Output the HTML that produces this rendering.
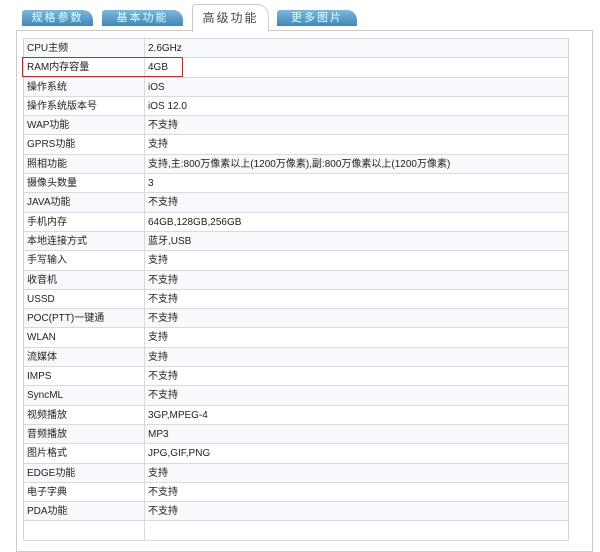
<!DOCTYPE html>
<html><head><meta charset="utf-8"><style>
body{margin:0;width:600px;height:522px;overflow:hidden;background:#fff;font-family:"Liberation Sans","Noto Sans CJK SC",sans-serif;position:relative}
.tab{position:absolute;top:10px;height:16px;background:linear-gradient(#7fb6d8,#3f88bb);color:#dff;font-size:11px;line-height:16px;text-align:center;letter-spacing:2px;border-radius:3px 10px 0 0}
.act{position:absolute;top:4px;left:192px;width:75px;height:27px;background:#fff;border:1px solid #ccc;border-bottom:none;border-radius:4px 12px 0 0;font-size:12px;text-align:center;line-height:26px;color:#444;letter-spacing:2px;z-index:2}
.box{position:absolute;left:16px;top:30px;width:575px;height:520px;border:1px solid #ccc}
.tbl{position:absolute;left:23px;top:38px;width:544px;border:1px solid #d4d4d4;border-bottom:none}
.r{height:19.3px;border-bottom:1px solid #dadada;box-sizing:border-box;font-size:10px;line-height:19px;color:#222;display:flex}
.r:nth-child(odd){background:#f8f9fc}
.r div:first-child{width:117px;padding-left:3px;border-right:1px solid #dadada}
.r div:last-child{padding-left:3px}
.red{position:absolute;left:22px;top:57px;width:161px;height:20px;border:1.5px solid #b03030;box-sizing:border-box}
</style></head><body>
<div class="box"></div>
<div class="tab" style="left:22px;width:71px">规格参数</div>
<div class="tab" style="left:102px;width:81px">基本功能</div>
<div class="act">高级功能</div>
<div class="tab" style="left:277px;width:80px">更多图片</div>
<div class="tbl">
<div class="r"><div>CPU主频</div><div>2.6GHz</div></div>
<div class="r"><div>RAM内存容量</div><div>4GB</div></div>
<div class="r"><div>操作系统</div><div>iOS</div></div>
<div class="r"><div>操作系统版本号</div><div>iOS 12.0</div></div>
<div class="r"><div>WAP功能</div><div>不支持</div></div>
<div class="r"><div>GPRS功能</div><div>支持</div></div>
<div class="r"><div>照相功能</div><div>支持,主:800万像素以上(1200万像素),副:800万像素以上(1200万像素)</div></div>
<div class="r"><div>摄像头数量</div><div>3</div></div>
<div class="r"><div>JAVA功能</div><div>不支持</div></div>
<div class="r"><div>手机内存</div><div>64GB,128GB,256GB</div></div>
<div class="r"><div>本地连接方式</div><div>蓝牙,USB</div></div>
<div class="r"><div>手写输入</div><div>支持</div></div>
<div class="r"><div>收音机</div><div>不支持</div></div>
<div class="r"><div>USSD</div><div>不支持</div></div>
<div class="r"><div>POC(PTT)一键通</div><div>不支持</div></div>
<div class="r"><div>WLAN</div><div>支持</div></div>
<div class="r"><div>流媒体</div><div>支持</div></div>
<div class="r"><div>IMPS</div><div>不支持</div></div>
<div class="r"><div>SyncML</div><div>不支持</div></div>
<div class="r"><div>视频播放</div><div>3GP,MPEG-4</div></div>
<div class="r"><div>音频播放</div><div>MP3</div></div>
<div class="r"><div>图片格式</div><div>JPG,GIF,PNG</div></div>
<div class="r"><div>EDGE功能</div><div>支持</div></div>
<div class="r"><div>电子字典</div><div>不支持</div></div>
<div class="r"><div>PDA功能</div><div>不支持</div></div>
<div class="r"><div></div><div></div></div>
</div>
<div class="red"></div>
</body></html>
